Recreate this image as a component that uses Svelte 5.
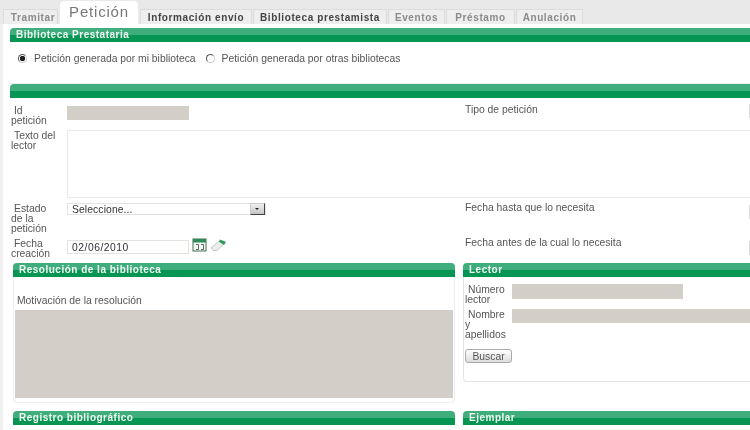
<script>
  const tabs = [
    { label: 'Tramitar', cls: 'muted t1' },
    { label: 'Petición', cls: 'active' },
    { label: 'Información envío', cls: 'dark t3' },
    { label: 'Biblioteca prestamista', cls: 'dark t4' },
    { label: 'Eventos', cls: 'muted t5' },
    { label: 'Préstamo', cls: 'muted t6' },
    { label: 'Anulación', cls: 'muted t7' }
  ];
</script>

<div class="page">
  <nav class="tabs">
    {#each tabs as t}
      <span class="tab {t.cls}">{t.label}</span>
    {/each}
  </nav>

  <main class="content">
    <section class="panel first">
      <h2 class="bar">Biblioteca Prestataria</h2>
      <div class="radios">
        <label class="radio"><span class="dot on"></span>Petición generada por mi biblioteca</label>
        <label class="radio"><span class="dot"></span>Petición generada por otras bibliotecas</label>
      </div>
    </section>

    <section class="panel">
      <h2 class="bar empty"></h2>
      <div class="form">
        <div class="row r1">
          <div class="lab">Id petición</div>
          <div class="main"><div class="ro short"></div></div>
          <div class="side">Tipo de petición</div>
          <div class="stub"></div>
        </div>
        <div class="row r2">
          <div class="lab">Texto del lector</div>
          <div class="main wide"><div class="area"></div></div>
        </div>
        <div class="row r3">
          <div class="lab">Estado de la petición</div>
          <div class="main">
            <div class="select">Seleccione...<span class="arrow"></span></div>
          </div>
          <div class="side">Fecha hasta que lo necesita</div>
          <div class="stub"></div>
        </div>
        <div class="row r4">
          <div class="lab">Fecha creación</div>
          <div class="main datecell">
            <div class="date">02/06/2010</div>
            <svg class="ico" width="15" height="14" viewBox="0 0 15 14">
              <rect x="1" y="1" width="13" height="12" fill="#f4f6f2" stroke="#47705a"/>
              <rect x="1" y="1" width="13" height="3.5" fill="#2f8a58"/>
              <path d="M4 6.500h2.500v5H4M9 6.500h2.500v5H9" fill="none" stroke="#5c6b66"/>
            </svg>
            <svg class="ico" width="17" height="14" viewBox="0 0 17 14">
              <path d="M1 10 9 3l5 3-7 6.500H3z" fill="#ececec" stroke="#b8b8b8" stroke-width=".7"/>
              <path d="M10 1.500 16 4l-2 3-5-3.200z" fill="#2e9c5d"/>
            </svg>
          </div>
          <div class="side">Fecha antes de la cual lo necesita</div>
          <div class="stub"></div>
        </div>
      </div>
    </section>

    <div class="cols">
      <section class="panel box left">
        <h2 class="bar">Resolución de la biblioteca</h2>
        <div class="motiv">Motivación de la resolución</div>
        <div class="motivbox"></div>
      </section>
      <section class="panel box right">
        <h2 class="bar">Lector</h2>
        <div class="lector">
          <div class="lrow one">
            <div class="lab">Número lector</div>
            <div class="ro num"></div>
          </div>
          <div class="lrow two">
            <div class="lab">Nombre y apellidos</div>
            <div class="ro full"></div>
          </div>
          <button class="btn">Buscar</button>
        </div>
      </section>
    </div>

    <div class="cols bottom">
      <section class="panel left"><h2 class="bar">Registro bibliográfico</h2></section>
      <section class="panel right"><h2 class="bar">Ejemplar</h2></section>
    </div>
  </main>
</div>

<style>
  :global(body) { margin: 0; background: #fff; overflow: hidden; }
  .page {
    width: 750px; height: 430px; overflow: hidden;
    font-family: "Liberation Sans", Arial, sans-serif;
    font-size: 10.350px; color: #555;
    filter: blur(.35px);
  }
  .tabs {
    height: 24px; box-sizing: border-box; padding: 1px 0 0 3px;
    display: flex; align-items: flex-end; gap: 1px;
    background: #e9e9e9;
  }
  .tab {
    box-sizing: border-box; height: 15px;
    display: flex; align-items: center; justify-content: center;
    background: #eeeeee; border: 1px solid #dcdcdc; border-bottom: 0;
    font-weight: bold; font-size: 10px; letter-spacing: .6px; white-space: nowrap;
  }
  .t1 { width: 55px; padding-left: 5px; }
  .t3 { width: 112px; }
  .t4 { width: 134px; }
  .t5 { width: 57px; }
  .t6 { width: 69px; }
  .t7 { width: 67px; }
  .muted { color: #8b8b8b; }
  .dark { color: #444; }
  .active {
    height: 23px; margin: 0 1px; background: #fff; color: #777; border: 0;
    border-radius: 4px 4px 0 0; font-weight: normal; font-size: 15px;
    letter-spacing: .8px; width: 78px; padding: 0 0 3px;
  }
  .content {
    background: #fff; height: 406px; box-sizing: border-box;
    padding: 4px 0 0 10px; border-left: 3px solid #f0f0f0;
  }
  .content > .panel { margin-left: -3px; margin-right: -3px; }
  .bar {
    margin: 0; height: 14px; box-sizing: border-box; padding: 0 6px 1px;
    display: flex; align-items: center;
    background: linear-gradient(#3fae7c 0 50%, #079553 50% 100%);
    border-radius: 4px 4px 0 0;
    color: #f2f8f4; font-size: 10px; font-weight: bold; letter-spacing: .5px;
  }
  .first { height: 56px; box-sizing: border-box; border-bottom: 1px solid #eee; }
  .radios { display: flex; gap: 10px; padding: 9px 0 0 8px; }
  .radio { display: flex; align-items: center; gap: 7px; height: 14px; }
  .dot {
    width: 9px; height: 9px; box-sizing: border-box; border-radius: 50%;
    border: 1px solid #555; background: #fff;
    border-right-color: #ccc; border-bottom-color: #ccc;
  }
  .dot.on { background: radial-gradient(circle, #222 0 2.500px, #fff 3px); }
  .form { padding: 8px 0 0 1px; }
  .row { display: grid; grid-template-columns: 56px 398px 1fr 4px; }
  .lab { text-indent: 3px; line-height: 10px; width: 47px; padding-top: 1px; }
  .r1 { height: 24px; }
  .r2 { height: 73px; }
  .r3 { height: 36px; }
  .r4 { height: 24px; }
  .r1 .lab, .r4 .lab { padding-top: 0; }
  .wide { grid-column: 2 / 5; }
  .side { line-height: 8px; }
  .r3 .side { line-height: 9px; }
  .r4 .side { line-height: 7px; }
  .stub { height: 14px; border-left: 1px solid #ddd; margin-top: -2px; }
  .r3 .stub, .r4 .stub { margin-top: 2px; }
  .ro { background: #d3cfc8; height: 15px; }
  .r1 .ro { height: 14px; }
  .short { width: 122px; }
  .area { height: 68px; box-sizing: border-box; border: 1px solid #eceae6; }
  .select {
    width: 199px; height: 12px; box-sizing: border-box; padding-left: 4px;
    border: 1px solid #e6e3de; color: #333; position: relative; line-height: 11px; letter-spacing: .1px;
  }
  .arrow {
    position: absolute; right: 0; top: -1px; width: 15px; height: 12px;
    background: linear-gradient(#f0f0f0, #c4c4c4); border: 1px solid #444; box-sizing: border-box;
    border-top-color: #ccc; border-left-color: #ccc;
  }
  .arrow::after {
    content: ""; position: absolute; left: 4px; top: 4px;
    border: 2.500px solid transparent; border-top-color: #222; border-bottom: 0;
  }
  .datecell { display: flex; align-items: flex-start; gap: 3px; padding-top: 1px; height: 18px; }
  .date {
    width: 122px; height: 14px; box-sizing: border-box; padding-left: 4px;
    border: 1px solid #e6e3de; color: #333; line-height: 13px; letter-spacing: .5px;
  }
  .ico { margin-top: -2px; flex: none; }
  .cols { display: grid; grid-template-columns: 442px 1fr; gap: 8px; width: 745px; }
  .box { border-radius: 4px; box-sizing: border-box; }
  .box .bar { margin: 0 -1px; }
  .right.box .bar { margin-right: 0; }
  .left.box { height: 140px; border: 1px solid #eee; border-top: 0; }
  .right.box { height: 119px; border-left: 1px solid #e4e4e4; border-bottom: 1px solid #e4e4e4; border-radius: 4px 0 0 4px; }
  .motiv { padding: 18px 0 0 3px; line-height: 12px; height: 33px; box-sizing: border-box; }
  .motivbox { margin: 0 1px; background: #d3cfc8; height: 88px; }
  .lector { padding: 7px 0 0 1px; }
  .lrow { display: grid; grid-template-columns: 47px 1fr; }
  .lrow .lab { width: 44px; }
  .lrow.one { height: 25px; }
  .lrow.two { height: 40px; }
  .num { width: 171px; }
  .full { height: 14px; }
  .btn {
    width: 47px; height: 14px; padding: 0;
    font: inherit; color: #555;
    background: linear-gradient(#fff, #ddd); border: 1px solid #aaa; border-radius: 3px;
    display: block;
  }
  .bottom { margin-top: 8px; }
</style>
